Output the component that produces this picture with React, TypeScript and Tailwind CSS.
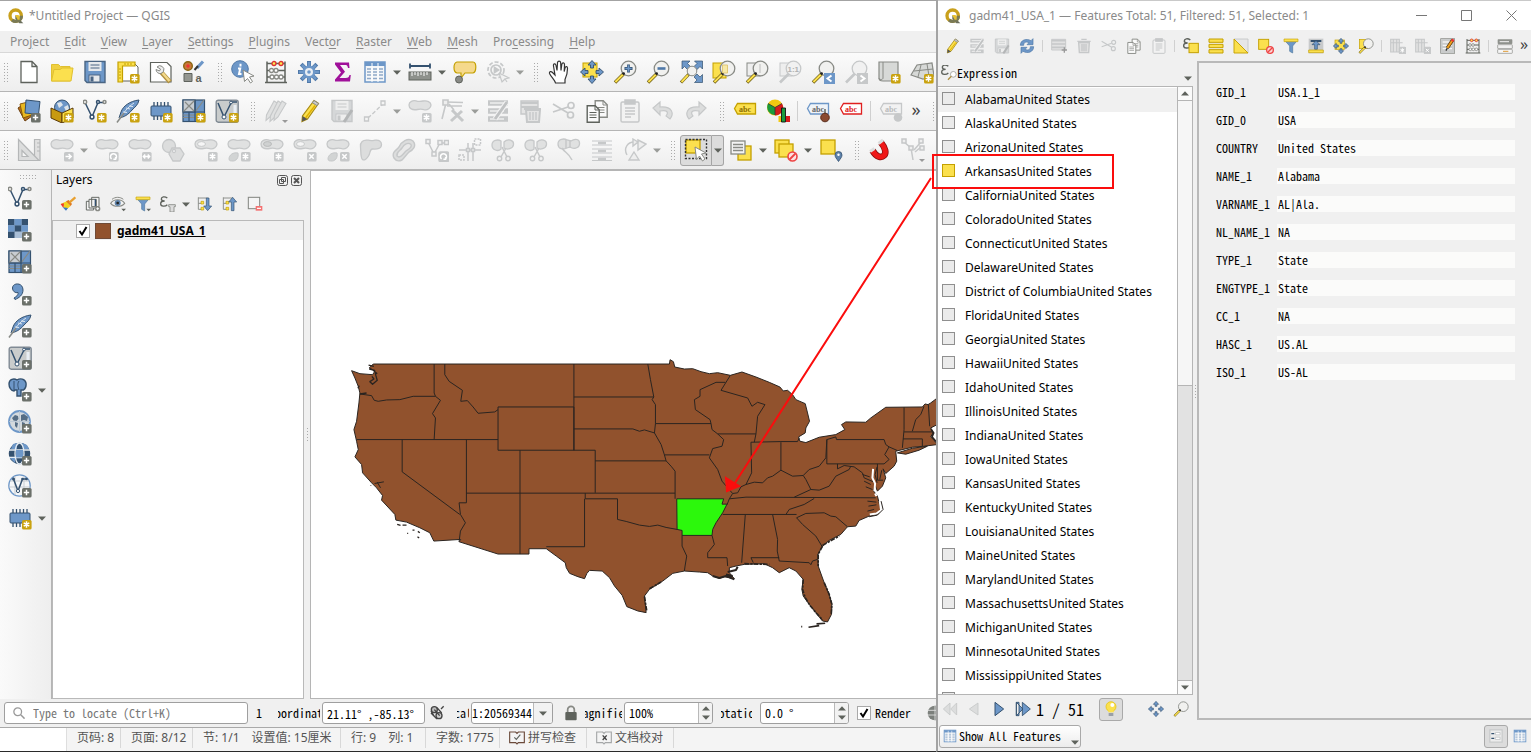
import type { ReactNode } from 'react';

const BLUE = '#6d97c8';
const NAVY = '#34516f';
const YEL = '#fbe04e';
const GOLD = '#c4a000';
const GR = '#888a85';
const DK = '#5e625c';
const LG = '#c6c8c9';
const FG = '#e0e1e1';

function Badge({ kind, off = false }: { kind: string; off?: boolean }) {
  const fill = off ? LG : kind === 'plus' ? '#6b706a' : '#c9a20f';
  const glyph: Record<string, string> = {
    plus: 'M18.5 15.8v5.4M15.8 18.5h5.4',
    star: 'M18.5 15.3v6.4M15.7 16.9l5.6 3.2M21.3 16.9l-5.6 3.2',
    x: 'M16.3 16.3l4.4 4.4M20.7 16.3l-4.4 4.4',
    right: 'M15.5 18.5h5.5M18.6 16l2.6 2.5-2.6 2.5',
    lr: 'M15.5 18.5h6M17.2 16.6l-1.8 1.9 1.8 1.9M19.8 16.6l1.8 1.9-1.8 1.9',
    turn: 'M16.6 21a3 3 0 1 1 3.8 0M20.6 19v2.2h-2.2',
  };
  return (
    <g>
      <rect x="14" y="14" width="9.6" height="9.6" rx="1.6" fill={fill} />
      <path d={glyph[kind]} stroke="#fff" strokeWidth="1.5" fill="none" />
    </g>
  );
}

const blob = <path d="M1 6c0-3.4 4-5 7-4.2 3 1 4 .8 7 .2 4-.8 8 1 8 4s-3.500 5.500-7 4.700c-2.500-.8-4-.7-6.500-.2C4 11.500 1 9.500 1 6z" fill={FG} stroke={LG} strokeWidth="1.3" />;
const ringBlob = (
  <g>
    {blob}
    <ellipse cx="7.500" cy="6" rx="4" ry="2.400" fill="#f6f6f6" stroke={LG} />
  </g>
);
const lens = (
  <g>
    <path d="M11 13.500L2 22.500" stroke="#6a5a10" strokeWidth="3.400" />
    <path d="M10 14.500L2.400 22" stroke={YEL} strokeWidth="2" />
    <circle cx="15.500" cy="8.500" r="7.300" fill="#f1f1ef" stroke={GR} strokeWidth="1.300" />
    <circle cx="10.600" cy="13.600" r="1.400" fill="#222" />
  </g>
);
const lensOff = (
  <g>
    <path d="M11 13.500L2 22.500" stroke={LG} strokeWidth="2.600" />
    <circle cx="15.500" cy="8.500" r="7.300" fill="#f1f1f1" stroke={LG} strokeWidth="1.300" />
  </g>
);
const vee = (
  <g fill="none" stroke={NAVY} strokeWidth="1.500">
    <path d="M2.500 4.500L9 18 15 3.500h6" />
    <circle cx="2" cy="3" r="1.700" fill="#fff" stroke={GR} />
    <circle cx="9" cy="18" r="1.900" fill="#fff" />
    <circle cx="15" cy="3" r="1.500" fill="#fff" />
    <circle cx="21.500" cy="3" r="1.500" fill="#fff" stroke={GR} />
  </g>
);
const feather = (
  <g>
    <path d="M23 1C14 2 7 7 5 13l-2 6c5-1 9-3 13-8 3-3 6-5 7-10z" fill={BLUE} stroke={NAVY} />
    <path d="M18 4C12 8 8 13 1 23M7 13l4 .5M10 9l4 1M13 7l4 .6" stroke="#dce6f0" fill="none" />
    <path d="M8 14L1 23.500" stroke={GR} strokeWidth="1.500" />
  </g>
);
const chip = (
  <g>
    <path d="M5 3v18M8.500 3v18M12 3v18M15.500 3v18M19 3v18" stroke={NAVY} strokeWidth="1.300" />
    <rect x="2" y="7" width="20" height="10" rx="1" fill={BLUE} stroke={NAVY} />
  </g>
);
const mesh = (
  <g stroke={NAVY} strokeWidth="1.200">
    <rect x="1" y="1" width="21.500" height="21.500" fill={BLUE} />
    <path d="M1 1h12v12H1z" fill="#c8cdd2" />
    <path d="M1 13l12-12M3 3l9 9M13 13L22 1M1 16h12M1 18.500h12" stroke={GR} />
    <path d="M13 1v21.500M1 13h21.500M7 13v9" fill="none" />
  </g>
);
const virt = (
  <g>
    <rect x="1.200" y="1.200" width="22" height="22" rx="2" fill="#c9cccc" stroke="#808a94" strokeWidth="1.400" />
    <path d="M3 4l6 14L16 4M16 3h6" stroke={NAVY} strokeWidth="1.500" fill="none" />
    <path d="M20 6v10" stroke="#e8eef4" strokeWidth="3" />
    <circle cx="9" cy="18" r="2" fill="#fff" stroke={NAVY} />
    <circle cx="16" cy="3.500" r="1.400" fill="#fff" stroke={NAVY} />
  </g>
);
const pencil = (
  <g>
    <path d="M17 1.500l4.500 3L10.500 20 5 22.500 5.500 17z" fill={YEL} stroke="#a88a10" strokeWidth="1.200" />
    <path d="M17 1.500l4.500 3-1.500 2.200-4.600-3z" fill="#c9c9c9" stroke={GR} />
    <path d="M5.500 17l5 3L5 22.500z" fill="#555" />
    <path d="M18 6.500L8.500 19" stroke="#e0b000" strokeWidth="1.400" />
  </g>
);
const scissors = (
  <g fill="none" stroke={LG} strokeWidth="1.700">
    <path d="M1 5l15 9M1 13l15-5" />
    <circle cx="19" cy="6.500" r="3" />
    <circle cx="18.500" cy="16" r="3" />
  </g>
);
const splitter = (
  <g>
    <path d="M1 7c0-5 6-6 9-4v8c-3 3-9 1-9-4zM13 4c4-4 10-2 9.500 2.500S16 12 13 10z" fill={FG} stroke={LG} strokeWidth="1.300" />
    <path d="M11 9l5 10M15 10l-5 9" stroke={LG} strokeWidth="1.500" />
    <circle cx="8.500" cy="20.500" r="2.200" fill="none" stroke={LG} strokeWidth="1.400" />
    <circle cx="17" cy="20.500" r="2.200" fill="none" stroke={LG} strokeWidth="1.400" />
  </g>
);
const globe = (
  <g>
    <circle cx="11.500" cy="11.500" r="10.500" fill="#d4d9dd" stroke={BLUE} strokeWidth="1.800" />
    <path d="M4 8l3-3 3 1 .5 3-2 2-3-.5zM7 12l3 1-1 5-2-2zM13 5l3-1 4 3-1 4-3-1-3 1zM14 12l3 1-1 4-2-1z" fill={NAVY} opacity=".8" />
    <path d="M1 11.500h21M11.500 1v21" stroke="#b7c6d6" strokeWidth=".8" />
  </g>
);
const arrows = (
  <g fill={BLUE} stroke={NAVY} strokeWidth=".9">
    <path d="M12 .5l4 4.500h-2.500v3h-3V5H8zM12 23.500l4-4.500h-2.500v-3h-3v3H8zM.5 12L5 8v2.500h3v3H5V16zM23.500 12L19 8v2.500h-3v3h3V16z" />
  </g>
);
const disk = (c: string, s: string, l: string) => (
  <g>
    <path d="M2 1.500h20v21H4l-2-2z" fill={c} stroke={s} strokeWidth="1.400" />
    <rect x="5.500" y="2" width="13" height="9" fill={l} />
    <path d="M7.500 5h9M7.500 8h9" stroke={s} />
    <rect x="6" y="15" width="11" height="7" fill={l} stroke={s} />
    <rect x="7.500" y="16.500" width="3" height="5" fill={s} />
  </g>
);
const table = (
  <g>
    <rect x="2" y="2" width="20" height="20" fill="#f4f6f8" stroke={BLUE} strokeWidth="1.500" />
    <path d="M2 4h20" stroke={BLUE} strokeWidth="4" />
    <path d="M4 9h4M10 9h4M16 9h4M4 12h4M10 12h4M16 12h4M4 15h4M10 15h4M16 15h4M4 18.500h4M10 18.500h4M16 18.500h4" stroke="#8fa9c8" strokeWidth="1.400" />
    <path d="M9 3v19M15 3v19" stroke="#fff" />
  </g>
);
const abacus = (
  <g>
    <path d="M3 1.500v21M21 1.500v21M1 22.500h22M3 3.500h18M3 10.500h18M3 17h18" stroke={DK} strokeWidth="1.500" />
    <g fill="#fff" strokeWidth="1.300">
      <circle cx="10" cy="3.500" r="2" stroke="#d33" fill="#fce94f" />
      <circle cx="17" cy="3.500" r="2" stroke="#d33" fill="#fce94f" />
      <circle cx="7.500" cy="10.500" r="2" stroke={GR} />
      <circle cx="12" cy="10.500" r="2" stroke={GR} />
      <circle cx="8" cy="17" r="2" stroke={GR} />
      <circle cx="12.500" cy="17" r="2" stroke={GR} />
      <circle cx="17" cy="17" r="2" stroke={GR} />
    </g>
  </g>
);
const funnel = (
  <g>
    <path d="M2 3h20l-7.500 9v10.500L10 20v-8z" fill={BLUE} stroke="#4f789f" />
    <path d="M1.500 3.500h21" stroke={YEL} strokeWidth="4" />
    <path d="M1.500 1.500h21v4h-21z" fill="none" stroke={GOLD} strokeWidth=".9" />
  </g>
);
const page = (x: number, y: number, c: string) => (
  <g transform={`translate(${x} ${y})`}>
    <path d="M.7.700h8l4 4v12.500h-12z" fill="#fafafa" stroke={c} strokeWidth="1.400" />
    <path d="M8.500.700v4.300h4M3 7.500h7M3 10h7M3 12.500h7" stroke={c} fill="none" />
  </g>
);
const tag = (fill: string, stroke: string) => <path d="M1.500 9.500l3-5h18v10.500h-18z" fill={fill} stroke={stroke} strokeWidth="1.300" />;
const tagText = (fill: string) => (
  <text x="6" y="12.500" fontSize="8" fontWeight="700" fontFamily="Liberation Serif, serif" fill={fill}>abc</text>
);

const art: Record<string, ReactNode> = {
  newFile: <path d="M4 1.500h11l5 5v16H4zM15 1.500v5h5" fill="#fff" stroke={DK} strokeWidth="1.300" />,
  open: (
    <g stroke="#e0c030">
      <path d="M1.500 21V4.500h7l2 2H20V21z" fill="#f0d040" />
      <path d="M1.500 21L4 9.500h6l2-1.500h11l-2 13z" fill={YEL} />
    </g>
  ),
  save: disk(BLUE, '#4a6583', '#e6e9ec'),
  layoutNew: (
    <g>
      <path d="M5 3h13l4 4v14H5z" fill="#fff" stroke={DK} />
      <path d="M2 2h17v4H6.500v16H2z" fill={YEL} stroke={GOLD} strokeWidth="1.200" />
      <path d="M9 3v2M12 3v2M15 3v2M3 9h2M3 12h2M3 15h2M3 18h2" stroke={GOLD} />
      <Badge kind="star" />
    </g>
  ),
  manager: (
    <g>
      <path d="M1.500 2.500H18l4 4V22H1.500z" fill="#fff" stroke={DK} strokeWidth="1.200" />
      <path d="M12 12l9 10" stroke="#b09040" strokeWidth="4.500" />
      <path d="M13.500 13l7 8" stroke="#f3d98a" strokeWidth="2.600" />
      <path d="M8 7a4 4 0 0 1 6.500 4.500L12 13.500A4.200 4.200 0 0 1 7 9.500l3.500 1.500 1-2z" fill="#eee" stroke={GR} />
    </g>
  ),
  style: (
    <g>
      <circle cx="6" cy="6" r="4.300" fill="#c9763a" stroke="#8a6510" strokeWidth="1.400" />
      <path d="M4 6l2-2 2 2-2 2z" fill="#e33" />
      <path d="M21 1.500l-6 6.500" stroke={BLUE} strokeWidth="3.200" />
      <path d="M16 6l-3.500 4" stroke="#333" strokeWidth="2" />
      <path d="M2 13.500h8v8H2z" fill="#949690" stroke={DK} />
      <text x="13.500" y="21.500" fontSize="11" fontWeight="700" fontFamily="Liberation Sans, sans-serif" fill={DK}>a</text>
    </g>
  ),
  identify: (
    <g>
      <circle cx="9" cy="9" r="8.300" fill={BLUE} stroke="#4f78a8" />
      <path d="M9.500 3.800v2.600M7 8.500h2.200L8 14h2.500" stroke="#fff" strokeWidth="2" fill="none" />
      <path d="M12 10l11 6-4.500 1 3 4.500-2 1.500-3-4.500-3 3z" fill="#fff" stroke={GR} />
    </g>
  ),
  abacus,
  gear: (
    <g>
      <path d="M12 1v22M1 12h22M4.200 4.200l15.600 15.600M19.800 4.200L4.200 19.800" stroke="#4f78a8" strokeWidth="4" />
      <path d="M12 2v20M2 12h20M5 5l14 14M19 5L5 19" stroke={BLUE} strokeWidth="2.600" />
      <circle cx="12" cy="12" r="6.500" fill={BLUE} />
      <circle cx="12" cy="12" r="4" fill="#e9eef4" />
      <circle cx="12" cy="12" r="1.800" fill={BLUE} />
    </g>
  ),
  sigma: <path d="M5 2.500h14l.5 5.500H18c-.5-2.500-1-3-3.500-3H10l5 6.700L9.500 18h6c3 0 3.500-1 4-3h1.300l-.8 6.500H5v-2l6-7L5 4.500z" fill="#a0109a" />,
  table,
  measure: (
    <g>
      <path d="M2 6h20M2 3.500v5M22 3.500v5" stroke={NAVY} strokeWidth="1.800" />
      <rect x="1" y="12" width="22" height="8" fill="#8e918c" stroke={DK} />
      <path d="M4 12v4M7 12v3M10 12v4M13 12v3M16 12v4M19 12v3" stroke="#fff" />
    </g>
  ),
  tips: (
    <g>
      <path d="M4 2h16c4 0 3.500 10 0 11H12l-4 5v-5H4c-4-1-4-10 0-11z" fill="#f5d98c" stroke={GOLD} strokeWidth="1.200" />
      <circle cx="6" cy="19.500" r="3.500" fill={GR} stroke={DK} />
    </g>
  ),
  action: (
    <g fill="none" stroke={LG} strokeWidth="1.700">
      <circle cx="10" cy="10" r="8" strokeDasharray="4 2" />
      <circle cx="10" cy="10" r="5" />
      <path d="M8.500 7.500l4 2.500-4 2.500z" fill={LG} />
      <path d="M13 13l10 5-4 1 2 3M13 13l3 9 3-3" fill="#f2f2f2" strokeWidth="1.200" />
    </g>
  ),
  hand: (
    <path d="M8.500 23c-.5-3-4-5.500-6-9.500-.5-2 1.500-2.500 3-1L8 15 6.500 6C6 3.500 8.500 3 9 5.500l1 5L10.500 3c0-2.500 3-2.500 3.200 0l.3 7.500.8-6c.4-2.200 2.800-2 2.700.3l-.3 6.700.8-3.500c.6-2 2.600-1.600 2.500.5 0 6-1 8-2.500 11v3.500z" fill="#fff" stroke="#333" strokeWidth="1.200" />
  ),
  panSel: (
    <g>
      <rect x="3" y="3" width="14" height="14" fill={YEL} stroke={GOLD} />
      {arrows}
    </g>
  ),
  zoomIn: (<g>{lens}<path d="M15.500 4.500v8M11.500 8.500h8" stroke="#34516f" strokeWidth="2.800" /><path d="M15.500 5.300v6.400M12.300 8.500h6.400" stroke={BLUE} strokeWidth="1.600" /></g>),
  zoomOut: (<g>{lens}<path d="M11.500 8.500h8" stroke="#4f78a8" strokeWidth="2.600" /></g>),
  zoomFull: (
    <g>
      <path d="M3 1h8L8.500 3.500l3 3-3 3-3-3L3 9zM23.500 1v8L21 6.500l-3 3-3-3 3-3L15.500 1zM23.500 22.500h-8L18 20l-3-3 3-3 3 3 2.500-2.500z" fill={BLUE} stroke={NAVY} strokeWidth=".7" />
      <path d="M10 14l-8 8.500" stroke="#6a5a10" strokeWidth="3.200" />
      <path d="M9 15l-6.500 7" stroke={YEL} strokeWidth="1.900" />
      <circle cx="13" cy="11" r="4.800" fill="#f1f1ef" stroke={GR} />
    </g>
  ),
  zoomSel: (<g><rect x="1" y="3" width="13" height="15" fill={YEL} stroke={GOLD} />{lens}<path d="M10.500 5h5v8h-5z" fill="#f7e9a6" stroke="#e0c878" /></g>),
  zoomLayer: (<g><rect x="2" y="3" width="13" height="13" fill="#eee" stroke={GR} />{lens}<path d="M15 4v9" stroke="#ccc" strokeWidth="1.500" /></g>),
  zoomNative: (
    <g>
      <rect x="2" y="3" width="12" height="13" fill="#eee" stroke={LG} />
      {lensOff}
      <text x="9.500" y="11.500" fontSize="8" fontWeight="700" fontFamily="Liberation Sans, sans-serif" fill="#b0b2b2">1:1</text>
    </g>
  ),
  zoomLast: (<g>{lens}<rect x="13" y="13" width="11" height="11" fill={BLUE} /><path d="M20.500 15.500l-4 3 4 3" stroke="#fff" strokeWidth="2" fill="none" /></g>),
  zoomNext: (<g>{lensOff}<rect x="13" y="13" width="11" height="11" fill={LG} /><path d="M16.500 15.500l4 3-4 3" stroke="#fff" strokeWidth="2" fill="none" /></g>),
  mapView: (<g><path d="M2 2h19v19H6c-3 0-4-1-4-3z" fill="#d7d9d7" stroke={GR} strokeWidth="1.200" /><path d="M6 2v16c0 2-4 2-4 0" stroke={GR} fill="none" /><Badge kind="star" /></g>),
  map3d: (<g><path d="M1 15L7 5l15-2 2 13-11 3z" fill="#d7d9d7" stroke={GR} strokeWidth="1.200" /><path d="M4 11l19-2M11 5l-3 12M17 4l2 12" stroke={GR} fill="none" /><Badge kind="star" /></g>),

  sources: (
    <g>
      <path d="M1 9l6-4 8 12-7 5z" fill="#b9701c" stroke="#6b3f10" />
      <path d="M3 5l12-3 3 13-12 4z" fill="#e8b820" stroke="#8a5a08" />
      <path d="M9 1l14 1.500-1.500 13L8 14z" fill={BLUE} stroke={NAVY} />
      <Badge kind="plus" />
    </g>
  ),
  gpkg: (
    <g>
      <circle cx="12" cy="8.500" r="7.500" fill={BLUE} stroke={NAVY} />
      <path d="M7 4l4-1 2 3-4 3zM14 8l4-2 1 4-3 2z" fill="#dde4ea" />
      <path d="M1 9l11 5v10L1 19z" fill="#c89a10" stroke="#5a3a08" />
      <path d="M12 14l11-5v10l-11 5z" fill={YEL} stroke="#5a3a08" />
      <Badge kind="star" />
    </g>
  ),
  newShape: (<g>{vee}<Badge kind="star" /></g>),
  newFeather: (<g>{feather}<Badge kind="star" /></g>),
  newChip: (<g>{chip}<Badge kind="star" /></g>),
  newMesh: (<g>{mesh}<Badge kind="star" /></g>),
  newVirt: (<g>{virt}<Badge kind="star" /></g>),
  edits: (
    <g stroke={LG} fill={FG} strokeWidth="1.100">
      <path d="M10 2l4 2.500L6 18l-4 3.500.5-5.500z" />
      <path d="M14 2l4 2.500L10 19l-4 3.500.5-5.500z" />
      <path d="M18 2l4 2.500L14 18l-4 3.500.5-5.500z" />
      <path d="M18 21h6l-3 3z" fill="#999" stroke="none" />
    </g>
  ),
  pencil,
  saveEdits: (<g>{disk('#d5d7d8', LG, '#eeeeee')}<path d="M22 11l-6 9-2 3" stroke="#b4b6b7" strokeWidth="3" /></g>),
  line: (<g fill="#f4f4f4" stroke={LG} strokeWidth="1.300"><path d="M5 19L20 5" strokeDasharray="4 2" /><path d="M1.500 18h4v4h-4zM18 2h4v4h-4z" /></g>),
  addPoly: (<g>{blob}<Badge kind="star" off /></g>),
  vertex: (
    <g stroke={LG} strokeWidth="1.600" fill="none">
      <path d="M5 4L1 20M5 3l17 .5M6 7h15M8 5l5 6" />
      <path d="M2 1h5v5H2z" fill="#eee" />
      <path d="M11 11l11 11M21 12L10 22" strokeWidth="3" />
    </g>
  ),
  attrs: (
    <g>
      <path d="M2 4h20M2 12h20M2 20h20" stroke={LG} strokeWidth="5.500" />
      <path d="M4 4h14M4 12h14M4 20h14" stroke="#eee" strokeWidth="1.500" />
      <path d="M21 3L9 20" stroke="#f3f3f3" strokeWidth="5" />
      <path d="M21 3L9 20" stroke="#c0c2c3" strokeWidth="3" />
    </g>
  ),
  trash: (
    <g stroke={LG} strokeWidth="1.400">
      <path d="M2 2h17v13H2z" fill="#e4e4e4" />
      <path d="M2 4h17M2 8h17" strokeWidth="2" />
      <path d="M5 10h17M7 11h14l-1 12H8z" fill="#e4e4e4" strokeWidth="2" />
      <path d="M11 13v8M14 13v8M17 13v8" />
    </g>
  ),
  cut: scissors,
  copy: (<g>{page(9.500, 1, GR)}{page(1.500, 6, DK)}</g>),
  paste: (<g stroke={LG} strokeWidth="1.500" fill="#f2f2f2"><rect x="3" y="3" width="18" height="20" rx="1.500" /><rect x="7" y="1" width="10" height="4" fill={LG} /><path d="M7 9h10M7 12h10M7 15h10M7 18h6" /></g>),
  undo: <path d="M9 3L2 9l7 7v-4c7-1.500 9 1 6 5l4 3c4-5 3-13-10-12z" fill="#dcdddd" stroke={LG} strokeWidth="1.200" />,
  redo: <path d="M15 3l7 6-7 7v-4c-7-1.500-9 1-6 5l-4 3C1 15 2 7 15 8z" fill="#dcdddd" stroke={LG} strokeWidth="1.200" />,
  labelY: (<g>{tag(YEL, GOLD)}{tagText('#8a6c00')}</g>),
  diagram: (
    <g>
      <circle cx="9" cy="8.500" r="8" fill="#f2c811" />
      <path d="M9 8.500V16A8 8 0 0 1 2 4.500z" fill="#1a9b3c" />
      <path d="M9 8.500l7-4A8 8 0 0 1 9 16.500z" fill="#d41c1c" />
      <path d="M9 8.500V16M9 8.500L2 4.500M9 8.500l7-4" stroke="#333" strokeWidth=".8" />
      <path d="M12.500 17h3v6h-3z" fill="#f2c811" />
      <path d="M15.500 9h4v14h-4z" fill="#1a9b3c" stroke="#111" strokeWidth=".9" />
      <path d="M20 17h4v6h-4z" fill="#d41c1c" />
    </g>
  ),
  labelPin: (<g>{tag('#eef3f8', BLUE)}{tagText('#666')}<path d="M19 10v6" stroke={GR} strokeWidth="2" /><circle cx="19" cy="18.500" r="4.300" fill="#8a4b32" stroke="#5a2d1c" /></g>),
  labelRed: (<g>{tag('#fff', '#e02020')}{tagText('#e02020')}</g>),
  labelOff: (<g>{tag('#f2f2f2', LG)}{tagText('#b9bbbb')}<circle cx="19" cy="18.500" r="4.300" fill={LG} /></g>),

  cad: (
    <g stroke="#b5b7b8" strokeWidth="1.200">
      <path d="M17.500 1.500h5.500v21h-5.500z" fill="#e0e0e0" />
      <path d="M20 5h3M20 9h3M20 13h3" />
      <path d="M1.500 1.500L22 22.500H1.500z" fill="#dcdddd" />
      <path d="M5 12.500l6 6H5z" fill="#f4f4f4" />
    </g>
  ),
  move: (<g>{blob}<Badge kind="right" off /></g>),
  rotate: (<g>{blob}<Badge kind="turn" off /></g>),
  scale: (<g>{blob}<Badge kind="lr" off /></g>),
  simplify: (<g fill="#dcdddd" stroke={LG} strokeWidth="1.300"><circle cx="8" cy="8" r="6.500" /><path d="M11 10h8l4 6-4 7h-7l-4-7z" /><circle cx="13" cy="13" r="1.500" fill="#fff" /></g>),
  addRing: (<g>{ringBlob}<Badge kind="star" off /></g>),
  addPart: (<g>{blob}<path d="M2 21c0-4 4-7 9-6 1 5-2 8-5 8-2 0-4 0-4-2z" fill="#d2d4d4" stroke={LG} /><Badge kind="star" off /></g>),
  fillRing: (<g>{blob}<ellipse cx="7.500" cy="6" rx="4" ry="2.400" fill="#cfd1d1" stroke="#b9bbbb" /><Badge kind="star" off /></g>),
  delRing: (<g>{ringBlob}<Badge kind="x" off /></g>),
  delPart: (<g>{blob}<path d="M2 21c0-4 4-7 9-6 1 5-2 8-5 8-2 0-4 0-4-2z" fill="#d2d4d4" stroke={LG} /><Badge kind="x" off /></g>),
  reshape: <path d="M1.500 9C1 4 4 1.500 9 2.200c3 .8 4 .5 7 0 4-.7 6.500 1.500 6.500 4.300 0 4-4 5-9 4.500-3 0-2 4-4 7-1.500 2.500-4 5-6 3.500C1.500 20 2 14 1.500 9z" fill="#dcdddd" stroke={LG} strokeWidth="1.300" />,
  offset: (<g fill="#dcdddd" stroke={LG} strokeWidth="1.400"><path d="M2 20c-3-6 3-8 5-11 2-5 9-10 14-6 4 5 0 9-4 11-3 3-4 5-7 8-3 1.500-6 1-8-2z" /><path d="M5 18c-1-4 3-5 5-8 2-4 6-6 9-3.500 1.500 3-2 4.500-5 6.500-3 3-6 8-9 5z" fill="#e9e9e9" /></g>),
  feature: (<g stroke={LG} strokeWidth="1.500" fill="#f2f2f2"><path d="M3 4l6 12 6-11h6" fill="none" /><path d="M1 1.500h4v4H1zM7 14h4v4H7zM13 2.500h4v4h-4zM19.500 2.500h4v4h-4z" /><Badge kind="turn" off /></g>),
  split2: (<g stroke={LG} strokeWidth="1.500" fill="none"><path d="M1 12h22M10 5v18M15 5v18" /><path d="M16.500 1h6v6h-6zM1 17h5v5H1z" strokeDasharray="2 1" /><path d="M8.500 10.500h3v3h-3zM13.500 10.500h3v3h-3z" fill="#eee" /></g>),
  splitter,
  merge: (<g><path d="M1 6c0-5 6-6 9-4l4 1c4-3 9-2 8.500 3S16 11 13 9l-3 1C6 12 1 11 1 6z" fill={FG} stroke={LG} strokeWidth="1.300" /><path d="M9 2v8M13 2v8M5 10c3 5 6 4 10 12" stroke={LG} fill="none" strokeWidth="1.500" /></g>),
  mergeAttr: (<g stroke={LG} strokeWidth="1.100"><path d="M2 3h20M2 7h20M2 11h20M2 15h20M2 19h20M2 22.500h20" /><path d="M8 5h8M8 13h8M8 21h8" strokeWidth="2.400" /></g>),
  rotSym: (<g stroke={LG} strokeWidth="1.400" fill="#eee"><path d="M4 17C0 10 5 4 11 4" fill="none" /><path d="M10 1l5 3-5 4zM15 2l8 4-8 6zM11 14l5 8H6z" /></g>),
  select: (
    <g>
      <rect x="2" y="2" width="14" height="13" fill={YEL} stroke={GOLD} strokeWidth="1.300" />
      <rect x="1.500" y="1.500" width="21" height="19" fill="none" stroke="#333" strokeWidth="1.400" strokeDasharray="2 1.500" />
      <path d="M11 9l11 6-4.500 1 3.500 5-2.500 2-3-5-3 3.500z" fill="#fff" stroke={GR} />
    </g>
  ),
  selForm: (<g><rect x="9" y="8" width="13" height="14" fill={YEL} stroke={GOLD} strokeWidth="1.300" /><rect x="2" y="3" width="14" height="13" fill="#f4f4f4" stroke={GR} strokeWidth="1.300" /><path d="M4 6.500h10M4 9.500h10M4 12.500h10" stroke={GR} strokeWidth="1.500" /></g>),
  deselect: (<g><rect x="1" y="2" width="14" height="13" fill={YEL} stroke={GOLD} strokeWidth="1.300" /><rect x="5" y="6" width="14" height="13" fill={YEL} stroke={GOLD} strokeWidth="1.300" /><circle cx="18.500" cy="18.500" r="4.500" fill="#fbe3e3" stroke="#e44" strokeWidth="1.600" /><path d="M15.500 21.500l6-6" stroke="#e44" strokeWidth="1.800" /></g>),
  selLoc: (<g><rect x="2" y="2" width="14" height="14" fill={YEL} stroke={GOLD} strokeWidth="1.300" /><path d="M19.500 23.500c-2-3-3.500-4.500-3.500-6.500a3.500 3.500 0 1 1 7 0c0 2-1.500 3.500-3.500 6.500z" fill="#5f83ab" stroke={NAVY} strokeWidth=".8" /><circle cx="19.500" cy="16.800" r="1.200" fill="#fff" /></g>),
  magnet: (
    <g fill="none">
      <path d="M4.500 12.500c4 7 9 7.500 11.500 5s1.500-7.500-3-13" stroke="#8a1010" strokeWidth="6.600" />
      <path d="M4.500 12.500c4 7 9 7.500 11.500 5s1.500-7.500-3-13" stroke="#f01818" strokeWidth="5" />
      <path d="M2 13.500l4.500-3M10.500 5.500L15 2" stroke="#ddd" strokeWidth="3" />
    </g>
  ),
  topo: (<g stroke={LG} strokeWidth="1.500" fill="none"><path d="M3 4l7 6 2 12M20 4l-7 8M20 9l-6 5" /><path d="M1 1h4v4H1zM18 1h4v4h-4zM19 8h4v4h-4zM8 8h4v4H8z" fill="#eee" /><path d="M18 21h6l-3 3z" fill="#999" stroke="none" /></g>),

  vPlus: (<g>{vee}<Badge kind="plus" /></g>),
  raster: (
    <g>
      <rect x="0" y="1" width="20" height="19" fill="#a9bed6" />
      <path d="M0 1h6.500v6.300H0zM13.500 1H20v6.300h-6.500zM6.500 7.300h7v6.300h-7zM0 13.600h6.500V20H0z" fill={NAVY} />
      <path d="M6.500 1h7v6.300h-7zM0 7.300h6.500v6.300H0zM13.500 7.300H20v6.300h-6.500z" fill={BLUE} />
      <Badge kind="plus" />
    </g>
  ),
  meshPlus: (<g>{mesh}<Badge kind="plus" /></g>),
  comma: (<g><path d="M4.500 6c0-5.500 10.500-6 10.500 2 0 5-4 8-8 9.500l-1-1.500c3.500-2 4.500-4 4-5.500-3 .8-5.500-1.500-5.500-4.500z" fill={BLUE} stroke={NAVY} /><Badge kind="plus" /></g>),
  featherPlus: (<g>{feather}<Badge kind="plus" /></g>),
  virtPlus: (<g>{virt}<Badge kind="plus" /></g>),
  postgis: (<g><path d="M1 6c0-5 5-6 8-4 3-2 8-1.500 9 3 .5 4-1 6-2.500 7H13v6h-4v-6H7l-1 1C3 13 1 9 1 6z" fill={BLUE} stroke={NAVY} strokeWidth="1.400" /><path d="M6 3v9M11 3c-2 3-1 6 0 9" stroke={NAVY} fill="none" /><Badge kind="plus" /></g>),
  wms: (<g>{globe}<Badge kind="plus" /></g>),
  wcs: (<g><circle cx="11.500" cy="11.500" r="10.700" fill={NAVY} /><path d="M1 8h21M1 15.500h21" stroke="#e6edf4" strokeWidth="1.400" /><path d="M8 8h7v7.500H8zM5 2l4-1v6H3zM14 1l5 2 2 4h-6zM2 16h5v5zM15 16h6l-5 5z" fill={BLUE} /><ellipse cx="11.500" cy="11.500" rx="4.500" ry="10.500" stroke="#e6edf4" fill="none" strokeWidth="1.300" /><Badge kind="plus" /></g>),
  wfs: (<g><circle cx="11.500" cy="11.500" r="10.700" fill="#f4f6f8" stroke={BLUE} strokeWidth="1.300" /><path d="M2 7h19M1 13h21M7 2v19M16 2v19" stroke="#c8cdd2" /><path d="M5.500 5L10 17l4.500-12H18" stroke={NAVY} strokeWidth="1.500" fill="none" /><circle cx="5.500" cy="5" r="1.500" fill={NAVY} /><circle cx="10" cy="17" r="1.600" fill="#fff" stroke={NAVY} /><circle cx="14.500" cy="5" r="1.300" fill={NAVY} /><circle cx="18.500" cy="5" r="1.300" fill={NAVY} /><Badge kind="plus" /></g>),

  brush: (<g><path d="M1 12l9-4 6 7-7 6z" fill="#f3d320" /><path d="M1 12l5-1-1 7z" fill="#e33" /><path d="M4 17l5 5 3-4z" fill="#3a78c8" /><path d="M9 8l7 7 2-3-5-6z" fill="#e07820" /><path d="M14 10l9-8" stroke="#e8a030" strokeWidth="3.500" /></g>),
  addGroup: (<g fill="#f4f4f4" stroke={DK} strokeWidth="1.400"><path d="M2 8h11v13H2z" /><path d="M6 5h11v13H6zM10 2h11v14H10z" /><path d="M15.500 5v10" strokeWidth="2" stroke={NAVY} /><circle cx="19" cy="19" r="4" fill={GR} stroke="none" /><path d="M19 17v4M17 19h4" stroke="#fff" /></g>),
  eye: (<g><path d="M1 11C6 4 17 4 22 11 17 17 6 17 1 11z" fill="#f2f2f2" stroke={GR} strokeWidth="1.600" /><circle cx="11.500" cy="10.500" r="4.500" fill="#5f83ab" /><circle cx="11.500" cy="10.500" r="2" fill="#222" /><path d="M3 5c5-4 12-4 17 0" stroke={GR} fill="none" strokeWidth="1.500" /><path d="M17 19h7l-3.500 4z" fill={DK} /></g>),
  filterL: (<g>{funnel}<path d="M17 19h7l-3.500 4z" fill={DK} /></g>),
  epsF: (<g><path d="M11 3C7 0 2 1 2 4.500c0 2 2 3 5 3-4 0-6 1.500-6 4C1 16 8 16 11 13" stroke={DK} strokeWidth="2" fill="none" /><path d="M13 13h10v3h-2v8h-6v-8h-2z" fill="#ddd" stroke={GR} strokeWidth="1.300" /></g>),
  expand: (<g><path d="M2 2v18M2 3h14M2 11h6M2 20h6" stroke={GR} strokeWidth="1.400" fill="none" /><path d="M6 8h4v4H6zM6 17h4v4H6z" fill={YEL} stroke={GOLD} /><path d="M14 3h4v12h4l-6 7-6-7h4z" fill={BLUE} stroke={NAVY} /></g>),
  collapse: (<g><path d="M2 2v18M2 3h14M2 11h6M2 20h6" stroke={GR} strokeWidth="1.400" fill="none" /><path d="M6 8h4v4H6zM6 17h4v4H6z" fill={YEL} stroke={GOLD} /><path d="M14 22h4V9h4l-6-7-6 7h4z" fill={BLUE} stroke={NAVY} /></g>),
  remove: (<g><rect x="2" y="2" width="17" height="17" fill="#f4f4f4" stroke={GR} strokeWidth="1.600" /><rect x="13" y="15" width="10" height="7" fill="#f47272" /><path d="M15 18.500h6" stroke="#fff" strokeWidth="1.800" /></g>),

  reload: (<g fill={BLUE} stroke="#4f78a8"><path d="M2 11C2 3 11 0 18 4l3-3v9h-9l3-3c-4-2-8-1-8 4z" /><path d="M22 13c0 8-9 11-16 7l-3 3v-9h9l-3 3c4 2 8 1 8-4z" /></g>),
  addRow: (<g><path d="M1 2h21v16H1z" fill="#e2e2e2" stroke={LG} strokeWidth="1.400" /><path d="M1 4h21M1 9h21M1 14h21" stroke={LG} strokeWidth="2.500" /><path d="M20 14v8M16 18h8" stroke="#999" strokeWidth="2" /></g>),
  bin: (<g stroke={LG} strokeWidth="2" fill="#e2e2e2"><path d="M2 5h20M8 2h8M4 7h16l-1 15H5z" /><path d="M9 9v11M12 9v11M15 9v11" /></g>),
  copySm: (<g>{page(8.500, 1, GR)}{page(2, 6, GR)}</g>),
  selExpr: (<g><path d="M11 3C7 0 2 1 2 4.500c0 2 2 3 5 3-4 0-6 1.500-6 4C1 16 8 16 11 13" stroke={DK} strokeWidth="2.200" fill="none" /><rect x="9" y="8" width="14" height="14" fill={YEL} stroke={GOLD} strokeWidth="1.500" /></g>),
  selAll: <path d="M1.500 1.500h21v5h-21zM1.500 9.500h21v5h-21zM1.500 17.500h21v5h-21z" fill={YEL} stroke={GOLD} strokeWidth="1.500" />,
  invert: (<g strokeWidth="1.400"><path d="M1.500 1.500h21v21z" fill="#e6e6e6" stroke={LG} /><path d="M1.500 1.500v21h21z" fill={YEL} stroke={GOLD} /></g>),
  desel: (<g><rect x="1" y="2" width="15" height="15" fill={YEL} stroke={GOLD} strokeWidth="1.400" /><circle cx="18" cy="18" r="5" fill="#fbd3d3" stroke="#e44" strokeWidth="2" /><path d="M15 21l6-6" stroke="#e44" strokeWidth="2" /></g>),
  funnel,
  moveTop: (<g><rect x="1" y="1" width="22" height="22" fill="#c8cacb" /><path d="M4 3h16v3H4z" fill={NAVY} /><path d="M12 4l6 6h-4v7h-4v-7H6z" fill={BLUE} stroke={NAVY} /><path d="M1 18h22v4H1z" fill={YEL} stroke={GOLD} /></g>),
  zoomSelSm: (<g><rect x="2" y="2" width="12" height="14" fill={YEL} stroke={GOLD} />{lens}</g>),
  addCol: (<g stroke={LG} strokeWidth="1.600" fill="#e2e2e2"><path d="M1 2h13v19H1zM5 2v19M10 2v19M1 7h18" /><Badge kind="star" off /></g>),
  delCol: (<g stroke={LG} strokeWidth="1.600" fill="#e2e2e2"><path d="M1 2h13v19H1zM5 2v19M10 2v19M1 7h18" /><Badge kind="x" off /></g>),
  notes: (<g><rect x="1" y="1" width="21" height="22" fill="#c9cbcb" stroke={GR} /><path d="M4 6h14M4 11h14M4 16h14" stroke="#f4f4f4" strokeWidth="2" /><path d="M19 3l-8 12" stroke="#5a3a10" strokeWidth="5" /><path d="M19 3l-8 12" stroke="#f0a020" strokeWidth="3" /><path d="M20 2l-2 3" stroke="#e33" strokeWidth="4" /><path d="M11 15l-2 4" stroke="#333" strokeWidth="2" /></g>),
  cond: (<g><rect x="1" y="2" width="22" height="7" rx="1" fill="#8e918c" /><path d="M4 5.500h14" stroke="#eee" strokeWidth="1.600" /><rect x="1" y="10" width="22" height="6" rx="1" fill="#f0f0f0" stroke={GR} /><rect x="1" y="17" width="22" height="6" rx="1" fill="#f6f6f6" stroke={GR} /><path d="M9 20h8" stroke="#e0a040" strokeWidth="1.600" /></g>),
  expr: (<g><path d="M11 2C7-1 2 0 2 3.500c0 2 2 3 5 3-4 0-6 1.500-6 4C1 15 8 15 11 12" stroke={DK} strokeWidth="2" fill="none" /><circle cx="18.500" cy="14" r="4.300" fill="#fff" stroke={GR} /><path d="M15.500 17l-5 5" stroke="#b09040" strokeWidth="2" /></g>),

  first: <path d="M12 3v18L2 12zM22 3v18l-9-9z" fill="#dcdddd" stroke={LG} strokeWidth="1.300" />,
  prev: <path d="M18 3v18L5 12z" fill="#dcdddd" stroke={LG} strokeWidth="1.300" />,
  next: <path d="M6 2v20l13-10z" fill={BLUE} stroke={NAVY} strokeWidth="1.500" />,
  last: <path d="M11 2v20l12-10zM2 2v20l10-10zM2 2h4v20H2z" fill={BLUE} stroke={NAVY} strokeWidth="1.300" />,
  bulb: (<g><circle cx="12" cy="8.500" r="7.500" fill={YEL} stroke="#e2c000" /><path d="M8 13h8v4H8z" fill={YEL} /><circle cx="14" cy="6" r="3" fill="#fff" /><path d="M8.500 18h7v4.500h-7z" fill="#9aa0a6" /></g>),
  pan4: arrows,
  lens,
  form: (<g><rect x="1.500" y="1.500" width="21" height="21" fill="#ececec" stroke={LG} strokeWidth="2" /><path d="M4 8h5M4 16h5" stroke={NAVY} strokeWidth="2" /><path d="M11 6h8v4h-8zM11 14h8v4h-8z" fill="#fff" stroke={LG} strokeWidth="1.500" /></g>),
  gps: (<g stroke="#444" strokeWidth="2" fill="none"><circle cx="8" cy="7" r="4.500" fill="#bbb" /><circle cx="15" cy="16" r="4.500" fill="#ccc" /><path d="M3 12l9 9M12 4l7 8M8 7l8 9M18 6l4-4M3 9l5 8" /></g>),
  lock: (<g><path d="M7 11V7a5 5 0 0 1 10 0v4" stroke={GR} strokeWidth="2.600" fill="none" /><rect x="3.500" y="10.500" width="17" height="12.500" rx="1.500" fill="#5f635d" /></g>),
  globe: (<g><circle cx="12" cy="12" r="11" fill="#7c807c" /><path d="M1 8h22M1 15h22M12 1v22" stroke="#ddd" strokeWidth="1.400" /></g>),
  spell: (<g fill="none" stroke="#6b4a3a" strokeWidth="1.700"><path d="M1 3h9l2 2 2-2h9v16h-9l-2 2-2-2H1z" /><path d="M8 11l3 3 6-7" stroke={DK} /></g>),
  proof: (<g fill="none" stroke="#a5a7a8" strokeWidth="1.700"><path d="M1 3h9l2 2 2-2h9v16h-9l-2 2-2-2H1z" /><path d="M10 8l6 7M16 8l-6 7" stroke="#444" strokeWidth="2" /></g>),
  logo: (
    <g>
      <circle cx="11.500" cy="11.500" r="8.500" fill="none" stroke="#c9a01c" strokeWidth="5" />
      <path d="M11 11l12 12h-6l-6-7z" fill="#6b6f5e" />
      <path d="M20 11.500A8.500 8.500 0 0 1 6 18" fill="none" stroke="#7a7a55" strokeWidth="5" />
      <path d="M10.500 10.500h5l2 2v5h-3z" fill="#e6c030" />
    </g>
  ),
};

function Icon({ name, className = 'size-6' }: { name: string; className?: string }) {
  return <svg viewBox="0 0 24 24" className={`${className} shrink-0`} aria-hidden="true">{art[name]}</svg>;
}

function Caret({ off = false, className = '' }: { off?: boolean; className?: string }) {
  return (
    <svg viewBox="0 0 8 5" className={`h-[5px] w-2 shrink-0 ${className}`} aria-hidden="true">
      <path d="M0 .5h8L4 4.800z" fill={off ? '#9a9c99' : '#5e625c'} />
    </svg>
  );
}

function Grip({ className = 'w-4' }: { className?: string }) {
  return (
    <div className={`flex shrink-0 justify-end pr-1 ${className}`}>
      <div className="h-5 w-[5px] bg-[radial-gradient(circle,#aaa_35%,transparent_45%)] bg-[length:3px_3px]" />
    </div>
  );
}

function ToolRow({ items }: { items: string[] }) {
  return (
    <div className="flex h-[39px] shrink-0 items-center overflow-hidden border-b border-[#b5b5b5] bg-linear-to-b from-[#fbfbfb] to-[#eeeeee]">
      <Grip className="w-3" />
      {items.map((it, i) => {
        if (it === '|') return <Grip key={i} />;
        if (it === 'v' || it === 'o') {
          return (
            <button key={i} aria-label="More options" className="flex w-3 shrink-0 justify-center"><Caret off={it === 'o'} /></button>
          );
        }
        if (it === '/') return <div key={i} className="mx-[3px] h-5 w-px shrink-0 bg-[#cfcfcf]" />;
        if (it === '>>') return <button key={i} className="w-[18px] shrink-0 pb-1 text-[18px] leading-4 text-[#444]">»</button>;
        if (it === 'select') {
          return (
            <div key={i} className="flex shrink-0 pl-px">
              <button aria-label="Select features" className="flex h-[31px] w-8 items-center justify-center rounded-l-[3px] border border-[#a5a5a5] bg-[#dcdcdc]"><Icon name="select" /></button>
              <button aria-label="Select options" className="flex h-[31px] w-3 items-center justify-center rounded-r-[3px] border border-l-0 border-[#a5a5a5] bg-[#dcdcdc]"><Caret /></button>
            </div>
          );
        }
        return <button key={i} aria-label={it} className="flex w-[33px] shrink-0 justify-center"><Icon name={it} /></button>;
      })}
    </div>
  );
}

const menus: [string, string, string][] = [
  ['Pro', 'j', 'ect'], ['', 'E', 'dit'], ['', 'V', 'iew'], ['', 'L', 'ayer'], ['', 'S', 'ettings'], ['', 'P', 'lugins'],
  ['Vect', 'o', 'r'], ['', 'R', 'aster'], ['', 'W', 'eb'], ['', 'M', 'esh'], ['Pro', 'c', 'essing'], ['', 'H', 'elp'],
];

const row1 = ['newFile', 'open', 'save', 'layoutNew', 'manager', 'style', '|', 'identify', 'abacus', 'gear', 'sigma', 'table', 'v', 'measure', 'v', 'tips', 'action', 'o', '|', 'hand', 'panSel', 'zoomIn', 'zoomOut', 'zoomFull', 'zoomSel', 'zoomLayer', 'zoomNative', 'zoomLast', 'zoomNext', 'mapView', 'map3d'];
const row2 = ['sources', 'gpkg', 'newShape', 'newFeather', 'newChip', 'newMesh', 'newVirt', '|', 'edits', 'pencil', 'saveEdits', 'line', 'o', 'addPoly', 'vertex', 'o', 'attrs', 'trash', 'cut', 'copy', 'paste', 'undo', 'redo', '|', 'labelY', 'diagram', '/', 'labelPin', 'labelRed', '/', 'labelOff', '>>', '|'];
const row3 = ['cad', 'move', 'o', 'rotate', 'scale', 'simplify', 'addRing', 'addPart', 'fillRing', 'delRing', 'delPart', 'reshape', 'offset', 'feature', 'split2', 'splitter', 'splitter', 'merge', 'mergeAttr', 'rotSym', 'o', '|', 'select', 'selForm', 'v', 'deselect', 'v', 'selLoc', '|', 'magnet', 'topo'];
const side = ['vPlus', 'raster', 'meshPlus', 'comma', 'featherPlus', 'virtPlus', 'postgis', 'wms', 'wcs', 'wfs', 'newChip'];
const layerTools = ['brush', 'addGroup', 'eye', 'filterL', 'epsF', 'v', 'expand', 'collapse', 'remove'];
const tableTools = ['pencil', 'attrs', 'saveEdits', 'reload', '/', 'addRow', 'bin', 'cut', 'copySm', 'paste', '/', 'selExpr', 'selAll', 'invert', 'desel', 'funnel', 'moveTop', 'panSel', 'zoomSelSm', '/', 'addCol', 'delCol', 'notes', 'abacus', '/', 'cond'];
const states = ['Alabama', 'Alaska', 'Arizona', 'Arkansas', 'California', 'Colorado', 'Connecticut', 'Delaware', 'District of Columbia', 'Florida', 'Georgia', 'Hawaii', 'Idaho', 'Illinois', 'Indiana', 'Iowa', 'Kansas', 'Kentucky', 'Louisiana', 'Maine', 'Maryland', 'Massachusetts', 'Michigan', 'Minnesota', 'Mississippi', 'Missouri'];
const fields: [string, string][] = [
  ['GID_1', 'USA.1_1'], ['GID_0', 'USA'], ['COUNTRY', 'United States'], ['NAME_1', 'Alabama'], ['VARNAME_1', 'AL|Ala.'], ['NL_NAME_1', 'NA'],
  ['TYPE_1', 'State'], ['ENGTYPE_1', 'State'], ['CC_1', 'NA'], ['HASC_1', 'US.AL'], ['ISO_1', 'US-AL'],
];

const outline =
  'M35 63L60 72 98 75 104 66 98 60 88 55 100 43H990L992 30 1002 36 1006 52 1035 58 1060 57 1085 66 1110 72 1135 69 1173 77 1208 67 1250 82 1290 98 1322 112 1332 124 1345 122 1360 135 1370 150 1398 162 1405 190 1411 215 1400 235 1398 250 1378 262 1382 275 1400 279 1440 263 1490 255 1517 240 1507 225 1520 217 1580 218 1595 205 1640 173 1750 172 1758 163 1767 165 1775 160 1795 145V225L1775 235 1782 250 1775 262 1788 275 1795 285 1755 290 1720 293 1670 305 1673 335 1665 350 1640 372 1632 358 1640 385 1630 410 1615 425 1607 405 1604 425 1615 440 1620 460 1626 480 1615 495 1590 500 1560 513 1550 530 1525 532 1505 555 1470 573 1450 590 1436 615 1437 650 1455 700 1470 735 1478 765 1477 795 1465 818 1450 815 1430 790 1410 765 1392 740 1388 720 1392 690 1370 665 1350 655 1320 670 1300 655 1275 643 1215 645 1190 650 1170 655 1170 670 1185 688 1155 682 1140 687 1120 680 1105 670 1080 668 1035 665 1000 672 970 695 930 720 915 740 920 790 895 785 862 772 848 738 825 710 810 685 788 665 750 663 742 672 735 688 715 682 690 672 680 655 677 640 650 620 620 598H568V614H475L358 577 363 570 282 575 270 550 240 535 200 518 168 512 165 495 125 452 128 438 110 415 95 400 68 370 65 345 45 322 55 300 50 275 42 240 50 215 57 160 60 130 55 110 45 85z';
const borders = [
  'M60 133L95 138 103 152 115 155 140 151 180 150 220 140 287 140', 'M283 43V130L287 140 302 152 278 192 287 205 283 270', 'M50 270H475', 'M187 270V367L360 495',
  'M315 43V75L328 95 368 122 363 155 383 153 400 172 415 191 465 187 475 180', 'M475 172H703V302H475z', 'M703 43V302', 'M703 142H943', 'M703 238H880L900 245 915 241 945 250',
  'M703 302H767V430', 'M767 334H980', 'M380 270V460H358L362 495 377 520 362 545 358 577', 'M541 302V614', 'M380 431H1007', 'M737 431V448H834V510L860 516 900 527 930 531 955 527 980 534 1013 540',
  'M735 448V592H620', 'M925 43L933 90 943 142 938 150 948 165V222L945 250 965 285 975 316 980 334 995 350 1007 365V448', 'M948 222H1115', 'M975 316H1110',
  'M1115 222L1112 210 1068 180 1065 150 1082 140V120L1130 98H1158', 'M1173 77L1145 122 1225 145 1238 170 1255 158 1277 165 1255 200 1250 253 1245 278', 'M1135 253H1250',
  'M1115 222L1118 240 1135 253 1153 270 1148 290 1120 297 1110 325 1135 360 1148 395 1165 415 1180 432 1170 448 1163 466', 'M1235 278L1237 370 1220 405 1205 412 1195 430 1180 432', 'M1235 278L1325 276H1375L1380 265', 'M1325 278V362',
  'M1220 405L1245 398 1270 400 1285 385 1300 380 1325 362 1360 380 1392 378 1400 390', 'M1392 378L1410 360 1440 350 1460 325 1463 270', 'M1463 343V270L1490 262 1492 270H1635L1640 285 1650 292 1637 315 1650 330 1635 343z',
  'M1650 292L1675 303', 'M1495 343V358L1515 348 1545 352 1570 370 1575 385 1610 400', 'M1615 343V392H1632', 'M1400 390L1415 420 1440 422 1470 410 1490 380 1530 360 1535 350', 'M1415 420L1365 443', 'M1170 448L1220 443 1610 445', 'M1150 495H1372',
  'M1425 447L1395 465 1350 480 1340 495', 'M1525 532L1490 502 1475 500 1455 490 1400 492 1372 505 1390 525 1430 560 1448 590', 'M1028 558V590L1042 620 1037 650 1035 665', 'M1118 558L1125 585 1105 610V625H1163L1165 650', 'M1218 495L1207 640',
  'M1300 495L1315 570 1314 605 1320 635 1410 640 1415 646 1420 635 1435 630', 'M1320 625H1235L1242 640', 'M1695 173V240L1690 295', 'M1755 170L1745 195 1730 210 1720 245', 'M1695 247H1780', 'M1692 268H1750V290', 'M1768 165L1772 230',
].join('');

function UsaMap() {
  return (
    <svg viewBox="-87 -537 1878 1584" preserveAspectRatio="xMinYMin slice" className="block h-full w-full" role="img" aria-label="Map of the United States">
      <g stroke="#2a2420" strokeWidth="3" strokeLinejoin="round" fill="none">
        <path d={outline} fill="#91522d" />
        <path d="M1675 310L1720 296 1765 290 1740 302 1700 314z" fill="#91522d" />
        <path d={borders} />
        <path d="M1012 448H1153L1148 464H1163L1150 490 1130 520 1120 540 1118 558H1028V543L1013 540z" fill="#2cf80c" />
        <path d="M1602 358L1600 385 1608 402 1606 425M1608 432L1612 440M1622 455L1626 482 1612 492 1592 495" stroke="#fff" strokeWidth="6" />
        <path d="M1570 375L1592 382M1575 395L1595 405M1580 412L1600 420M1585 455L1612 458M1588 470L1612 466M1585 485L1605 480M1614 352L1608 375 1614 400M1628 362L1622 390M1626 455L1632 480 1615 497 1590 502" strokeWidth="3" />
        <path d="M88 58L104 62 108 78 112 92 98 104 90 96 102 88 96 80M100 62L112 72M86 46L102 50M58 108L54 116M60 133L80 130" strokeWidth="4" />
        <path d="M104 402L132 397M112 398L122 415M92 408h2" />
        <path d="M172 525L182 528M188 527h12M202 552h3M218 542h6M234 546l6 4M233 562l5 4" strokeWidth="4" />
        <path d="M1386 832h3M1408 834L1440 829M1432 824L1458 822" strokeWidth="5" />
        <path d="M1120 680L1140 686 1160 680 1185 690M1165 668L1190 662 1195 652M1160 675L1180 680" strokeWidth="6" />
        <path d="M1392 690L1390 720 1398 745 1412 768 1432 792 1450 812M1455 700L1470 735 1478 765 1476 795M1450 590L1437 615 1437 650M1450 588L1500 560M915 742L922 786M930 718L965 698M1215 643L1290 645" strokeWidth="5" strokeDasharray="14 4 7 3" />
        <path d="M1776 238l8 12-5 12 12 14" strokeWidth="5" />
      </g>
    </svg>
  );
}

const mono = "font-['Noto_Sans_Mono_CJK_SC','DejaVu_Sans_Mono',monospace]";

function Spin({ label, value }: { label: string; value: string }) {
  return (
    <div className="flex h-[22px] w-[89px] shrink-0 overflow-hidden rounded-[3px] border border-[#9f9f9f] bg-white">
      <input aria-label={label} defaultValue={value} className="min-w-0 flex-1 px-1 text-black outline-none" />
      <div className="flex w-[14px] flex-col items-center justify-center gap-1 border-l border-[#b9b9b9] bg-[#f2f2f2]">
        <button aria-label={`${label} up`}><Caret className="rotate-180" /></button>
        <button aria-label={`${label} down`}><Caret /></button>
      </div>
    </div>
  );
}

function Clipped({ text, className }: { text: string; className: string }) {
  return <span className={`flex shrink-0 justify-center overflow-hidden whitespace-nowrap ${className}`}>{text}</span>;
}

function CheckMark() {
  return (
    <svg viewBox="0 0 14 14" className="size-[14px] shrink-0" aria-hidden="true">
      <rect x=".5" y=".5" width="13" height="13" fill="#fff" stroke="#a9a9a9" />
      <path d="M3.500 7l2.500 3.500L10.500 3" stroke="#000" strokeWidth="2" fill="none" />
    </svg>
  );
}

function StatusBar() {
  return (
    <div className={`flex h-[29px] shrink-0 items-center overflow-hidden border-b border-[#a9a9a9] bg-[#f0f0f0] pl-1 text-[12px] leading-4 text-black ${mono}`}>
      <label className="flex h-[22px] w-[244px] shrink-0 items-center gap-2 rounded-[3px] border border-[#9f9f9f] bg-white pl-2">
        <svg viewBox="0 0 14 14" className="size-3 shrink-0" aria-hidden="true"><circle cx="5.500" cy="5.500" r="4.500" fill="none" stroke="#999" strokeWidth="1.500" /><path d="M9 9l4.500 4.500" stroke="#999" strokeWidth="1.800" /></svg>
        <input placeholder="Type to locate (Ctrl+K)" aria-label="Locate" className="min-w-0 flex-1 outline-none placeholder:text-[#777]" />
      </label>
      <span className="w-[22px] shrink-0 text-center">1</span>
      <Clipped text="Coordinate" className="ml-2 mr-[2px] w-[42px]" />
      <input aria-label="Coordinate" defaultValue="21.11° ,-85.13°" className="h-[22px] w-[103px] shrink-0 rounded-[3px] border border-[#9f9f9f] bg-white px-1 outline-none" />
      <button aria-label="Toggle extents" className="ml-1 shrink-0"><Icon name="gps" className="size-4" /></button>
      <Clipped text="Scale" className="ml-3 w-3" />
      <div className="ml-[2px] flex h-[22px] w-[82px] shrink-0 items-center overflow-hidden rounded-[3px] border border-[#9f9f9f] bg-white">
        <select aria-label="Scale" className="w-[61px] appearance-none text-black outline-none"><option>1:20569344</option></select>
        <span className="flex h-full flex-1 items-center justify-center border-l border-[#b9b9b9] bg-[#f2f2f2]"><Caret /></span>
      </div>
      <button aria-label="Lock scale" className="ml-[10px] shrink-0"><Icon name="lock" className="size-4" /></button>
      <Clipped text="Magnifier" className="ml-[6px] mr-[2px] w-[37px]" />
      <Spin label="Magnifier" value="100%" />
      <Clipped text="Rotation" className="mx-2 w-[31px]" />
      <Spin label="Rotation" value="0.0 °" />
      <label className="ml-2 flex shrink-0 items-center gap-1">
        <input type="checkbox" defaultChecked className="sr-only" />
        <CheckMark />
        Render
      </label>
      <button aria-label="Projection" className="ml-4 shrink-0"><Icon name="globe" className="size-4" /></button>
    </div>
  );
}

function DocBar() {
  const cell = 'flex h-5 shrink-0 items-center gap-3 border-r border-[#d8d8d8] px-[10px]';
  return (
    <div className="flex h-6 shrink-0 overflow-hidden whitespace-nowrap border-b border-[#2a2a2a] bg-[#f4f4f4] font-['Noto_Sans','Noto_Sans_CJK_SC',sans-serif] text-[12px] leading-5 text-[#555]">
      <div className="w-[67px] shrink-0 border-r border-[#dedede] bg-white" />
      <div className={`${cell} w-[54px]`}>页码: 8</div>
      <div className={`${cell} w-[72px]`}>页面: 8/12</div>
      <div className={`${cell} w-[148px]`}><span>节: 1/1</span><span>设置值: 15厘米</span></div>
      <div className={`${cell} w-[85px]`}><span>行: 9</span><span>列: 1</span></div>
      <div className={`${cell} w-[74px]`}>字数: 1775</div>
      <button className="flex h-5 w-[87px] shrink-0 items-center gap-[3px] border-r border-[#d8d8d8] pl-[9px]"><Icon name="spell" className="size-4" />拼写检查</button>
      <button className="flex h-5 w-[87px] shrink-0 items-center gap-[3px] border-r border-[#d8d8d8] pl-[9px]"><Icon name="proof" className="size-4" />文档校对</button>
    </div>
  );
}

function LayersPanel() {
  return (
    <section className="flex w-[252px] shrink-0 flex-col">
      <header className="flex h-5 items-center justify-between pl-1 pr-[2px] text-[12px] text-black">
        <h2>Layers</h2>
        <div className="flex gap-[3px]">
          <button aria-label="Float panel">
            <svg viewBox="0 0 11 11" className="size-[11px]" fill="none" stroke="#555"><rect x=".5" y=".5" width="10" height="10" rx="2" /><path d="M4.500 2.500h4v4h-4zM2.500 4.500h4v4h-4z" /></svg>
          </button>
          <button aria-label="Close panel">
            <svg viewBox="0 0 11 11" className="size-[11px]" fill="none" stroke="#555"><rect x=".5" y=".5" width="10" height="10" rx="2" /><path d="M3 3l5 5M8 3l-5 5" strokeWidth="2" /></svg>
          </button>
        </div>
      </header>
      <div className="flex h-[30px] items-center pb-[2px] pl-[3px]">
        {layerTools.map((t) =>
          t === 'v' ? (
            <button key={t} aria-label="Filter options" className="flex w-3 justify-center"><Caret /></button>
          ) : (
            <button key={t} aria-label={t} className="flex w-[25px] justify-center"><Icon name={t} className="size-4" /></button>
          ),
        )}
      </div>
      <div className="flex-1 border border-[#b9b9b9] bg-white">
        <label className="flex h-[19px] items-center bg-[#f0f0f0] pl-[23px] text-[12px] font-bold text-black">
          <input type="checkbox" defaultChecked className="sr-only" />
          <CheckMark />
          <span className="ml-[5px] size-4 border border-[#6f4a36] bg-[#91522d]" />
          <span className="ml-[6px] underline">gadm41_USA_1</span>
        </label>
      </div>
    </section>
  );
}

function MainWindow() {
  return (
    <section className="flex min-w-0 flex-1 flex-col overflow-hidden bg-[#f0f0f0]">
      <header className="flex h-[31px] shrink-0 items-center gap-[5px] border-t border-[#a3a3a3] bg-white pl-2 text-[12px] text-[#8a8a8a]">
        <Icon name="logo" className="size-4" />
        <h1>*Untitled Project — QGIS</h1>
      </header>
      <nav className="flex h-[22px] shrink-0 items-center gap-[15px] border-b border-[#d8d8d8] pl-[10px] text-[12px] text-[#8a8a8a]">
        {menus.map(([a, b, c]) => (
          <button key={a + b + c}>{a}<span className="underline underline-offset-2">{b}</span>{c}</button>
        ))}
      </nav>
      <ToolRow items={row1} />
      <ToolRow items={row2} />
      <ToolRow items={row3} />
      <div className="flex min-h-0 flex-1">
        <aside className="flex w-[52px] shrink-0 flex-col border-r border-[#b5b5b5] bg-linear-to-r from-[#fafafa] to-[#eeeeee]">
          <div className="mb-px ml-[19px] mt-1 h-[7px] w-[17px] shrink-0 bg-[radial-gradient(circle,#aaa_35%,transparent_45%)] bg-[length:3px_3px]" />
          {side.map((s) => (
            <div key={s} className="flex h-8 items-center pl-2">
              <button aria-label={s}><Icon name={s} /></button>
              {(s === 'postgis' || s === 'newChip') && <button aria-label={`${s} options`} className="ml-[6px]"><Caret /></button>}
            </div>
          ))}
        </aside>
        <LayersPanel />
        <div className="flex w-[6px] shrink-0 items-center justify-center">
          <div className="h-[15px] w-[3px] bg-[radial-gradient(circle,#aaa_35%,transparent_45%)] bg-[length:3px_3px]" />
        </div>
        <main className="min-w-0 flex-1 overflow-hidden border border-r-0 border-[#b5b5b5] bg-white"><UsaMap /></main>
      </div>
      <StatusBar />
      <DocBar />
    </section>
  );
}

function FeatureList() {
  return (
    <div className="flex w-[255px] shrink-0 flex-col">
      <button className={`flex h-[25px] shrink-0 items-center pb-[2px] pl-[3px] text-[12px] text-black ${mono}`}>
        <Icon name="expr" className="size-4" />
        <span>Expression</span>
        <Caret className="ml-auto mr-px mt-3" />
      </button>
      <div className="flex min-h-0 flex-1 border border-l-0 border-[#b5b5b5] bg-white">
        <ul className="min-h-0 flex-1 overflow-hidden pt-px text-[12px] text-black">
          {states.map((s) => (
            <li key={s}>
              <label className={s === 'Alabama' ? 'flex h-6 items-center gap-[10px] bg-[#f0f0f0] pl-[4px]' : 'flex h-6 items-center gap-[10px] pl-[4px]'}>
                <input type="checkbox" defaultChecked={s === 'Arkansas'} className="mb-1 size-[13px] appearance-none border border-[#8f8f8f] bg-[#ebebeb] checked:border-[#c4a000] checked:bg-[#fbe04e]" />
                <span className="whitespace-nowrap">{s}United States</span>
              </label>
            </li>
          ))}
        </ul>
        <div className="flex w-[15px] shrink-0 flex-col border-l border-[#b5b5b5] bg-[#e2e2e2]">
          <button aria-label="Scroll up" className="flex h-[14px] items-center justify-center border-b border-[#b5b5b5] bg-[#fafafa]"><Caret className="rotate-180" /></button>
          <div className="h-[285px] border-b border-[#b5b5b5] bg-[#f6f6f6]" />
          <button aria-label="Scroll down" className="mt-auto flex h-[14px] items-center justify-center border-t border-[#b5b5b5] bg-[#fafafa]"><Caret /></button>
        </div>
      </div>
      <div className="flex h-[26px] shrink-0 items-center pt-[2px] text-black">
        <button aria-label="First" className="flex w-6 shrink-0 justify-center"><Icon name="first" className="size-4" /></button>
        <button aria-label="Previous" className="flex w-6 shrink-0 justify-center"><Icon name="prev" className="size-4" /></button>
        <button aria-label="Next" className="flex w-[26px] shrink-0 justify-center"><Icon name="next" className="size-4" /></button>
        <button aria-label="Last" className="flex w-[22px] shrink-0 justify-center"><Icon name="last" className="size-4" /></button>
        <span className={`w-[52px] shrink-0 whitespace-nowrap pl-[2px] text-[16px] leading-5 ${mono}`}>1 / 51</span>
        <button aria-label="Highlight feature" className="ml-[13px] flex h-[23px] w-6 shrink-0 items-center justify-center rounded-[3px] border border-[#a9a9a9] bg-[#dcdcdc]"><Icon name="bulb" className="size-4" /></button>
        <button aria-label="Pan to feature" className="ml-auto flex w-[25px] shrink-0 justify-center"><Icon name="pan4" className="size-4" /></button>
        <button aria-label="Zoom to feature" className="flex w-[25px] shrink-0 justify-center"><Icon name="lens" className="size-4" /></button>
      </div>
    </div>
  );
}

function TableWindow() {
  return (
    <section className="flex w-[595px] shrink-0 flex-col border-b border-l-2 border-b-[#2a2a2a] border-l-[#a3a3a3] bg-[#f0f0f0]">
      <header className="flex h-[30px] shrink-0 items-center gap-2 border-t border-[#c9c9c9] bg-white pl-[7px] text-[12px] text-[#8a8a8a]">
        <Icon name="logo" className="size-4" />
        <h2>gadm41_USA_1 — Features Total: 51, Filtered: 51, Selected: 1</h2>
        <div className="ml-auto flex gap-[34px] pr-[14px]">
          {['M0 5.500h11', 'M.5.500h10v10H.5z', 'M.5.500l10 10M10.500.500l-10 10'].map((d, i) => (
            <button key={d} aria-label={['Minimize', 'Maximize', 'Close'][i]}>
              <svg viewBox="0 0 11 11" className="size-[11px]" fill="none" stroke="#777"><path d={d} /></svg>
            </button>
          ))}
        </div>
      </header>
      <div className="flex h-[31px] shrink-0 items-center overflow-hidden pl-px">
        {tableTools.map((t, i) =>
          t === '/' ? (
            <div key={i} className="mx-[3px] h-3 w-px shrink-0 bg-[#d0d0d0]" />
          ) : (
            <button key={i} aria-label={t} className="flex w-[25px] shrink-0 justify-center"><Icon name={t} className="size-4" /></button>
          ),
        )}
        <button className="ml-[3px] pb-1 text-[16px] leading-4 text-[#444]">»</button>
      </div>
      <div className="flex min-h-0 flex-1">
        <FeatureList />
        <div className="flex w-[4px] shrink-0 items-center justify-center">
          <div className="h-[15px] w-[3px] bg-[radial-gradient(circle,#aaa_35%,transparent_45%)] bg-[length:3px_3px]" />
        </div>
        <form className={`mb-px flex min-w-0 flex-1 flex-col gap-3 border-2 border-r-0 border-[#b9b9b9] pl-[17px] pr-4 pt-[21px] text-[12px] leading-4 text-black ${mono}`}>
          {fields.map(([k, v]) => (
            <label key={k} className="flex h-4 items-center">
              <span className="w-[61px] shrink-0">{k}</span>
              <input readOnly value={v} className="h-4 min-w-0 flex-1 bg-[#fbfbfa] px-px outline-none" />
            </label>
          ))}
        </form>
      </div>
      <footer className="flex h-[30px] shrink-0 items-center pl-px pr-1">
        <button className={`flex h-[23px] w-[142px] items-center gap-[2px] rounded-[3px] border border-[#a9a9a9] bg-linear-to-b from-white to-[#ececec] pl-[3px] text-[12px] text-black ${mono}`}>
          <Icon name="table" className="size-[14px]" />
          Show All Features
          <Caret className="ml-auto mr-px mt-3" />
        </button>
        <button aria-label="Form view" className="ml-auto flex h-[23px] w-6 items-center justify-center rounded-[3px] border border-[#a9a9a9] bg-[#dcdcdc]"><Icon name="form" className="size-[14px]" /></button>
        <button aria-label="Table view" className="ml-[5px]"><Icon name="table" className="size-[14px]" /></button>
      </footer>
    </section>
  );
}

export default function App() {
  return (
    <div className="relative flex h-screen overflow-hidden font-['Noto_Sans',sans-serif]">
      <MainWindow />
      <TableWindow />
      <svg viewBox="720 150 400 350" className="pointer-events-none absolute right-[411px] top-[150px] h-[350px] w-[400px]" fill="none" stroke="#fb0d0d" strokeWidth="2" aria-hidden="true">
        <path d="M933 155h180v33H933zM931 178L733 486" />
        <path d="M726 478l13 8-12 5z" fill="#fb0d0d" />
      </svg>
    </div>
  );
}
